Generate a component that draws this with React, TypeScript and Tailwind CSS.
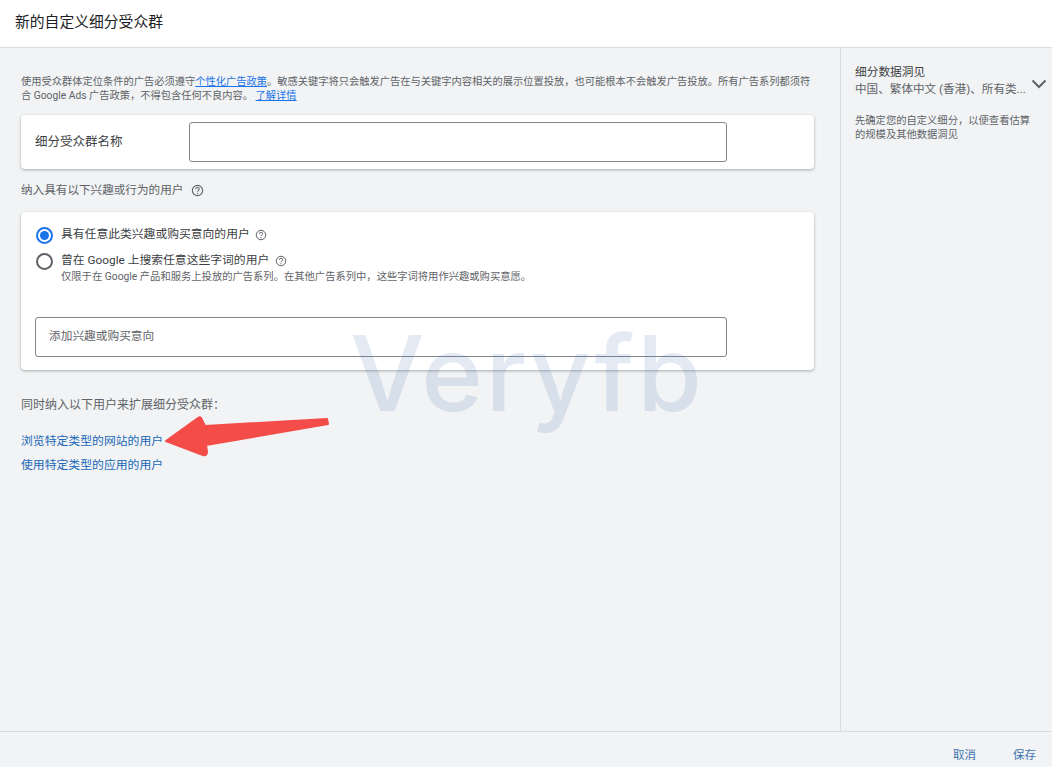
import React from "react";

const cjk = "font-['Roboto','Noto_Sans_CJK_SC',sans-serif]";

function Help({ size = 13 }: { size?: number }) {
  return (
    <svg width={size} height={size} viewBox="0 0 24 24" fill="none" className="shrink-0 text-[#5f6368]">
      <circle cx="12" cy="12" r="9.5" stroke="currentColor" strokeWidth="2" />
      <path d="M8.8 9.6a3.2 3.2 0 0 1 6.4 0c0 2.2-3.2 2.4-3.2 4.8" stroke="currentColor" strokeWidth="2" />
      <circle cx="12" cy="17.3" r="1.2" fill="currentColor" />
    </svg>
  );
}

function Radio({ checked }: { checked?: boolean }) {
  return checked ? (
    <span className="ml-px flex h-[17px] w-[17px] shrink-0 items-center justify-center rounded-full border-2 border-[#1a73e8]">
      <span className="h-[9px] w-[9px] rounded-full bg-[#1a73e8]" />
    </span>
  ) : (
    <span className="ml-px h-[17px] w-[17px] shrink-0 rounded-full border-2 border-[#5f6368]" />
  );
}

export default function App() {
  return (
    <div className={`${cjk} relative flex h-[767px] w-[1052px] flex-col overflow-hidden bg-[#f1f3f4] text-[#3c4043]`}>
      <header className="flex h-[48px] shrink-0 items-center border-b border-[#dadce0] bg-white pb-[3px] pl-[15px] text-[14.8px] text-[#202124]">
        新的自定义细分受众群
      </header>

      <div className="flex min-h-0 flex-1">
        <main className="w-[841px] shrink-0 border-r border-[#dadce0] pl-[21px] pr-[26px] pt-[27px]">
          <p className="text-[10.25px] leading-[14px] text-[#5f6368]">
            使用受众群体定位条件的广告必须遵守
            <a className="text-[#1a73e8] underline">个性化广告政策</a>
            。敏感关键字将只会触发广告在与关键字内容相关的展示位置投放，也可能根本不会触发广告投放。所有广告系列都须符合 Google Ads 广告政策，不得包含任何不良内容。{" "}
            <a className="text-[#1a73e8] underline">了解详情</a>
          </p>

          <section className="mt-[12px] flex h-[54px] items-center rounded bg-white pl-[14px] shadow-[0_1px_3px_rgba(60,64,67,0.4)]">
            <span className="w-[154px] shrink-0 text-[12.5px]">细分受众群名称</span>
            <div className="h-[40px] w-[538px] rounded-[3px] border border-[#80868b] bg-white" />
          </section>

          <div className="mt-[14px] flex items-center gap-[8px] text-[11.6px] leading-[14px] text-[#5f6368]">
            纳入具有以下兴趣或行为的用户
            <Help />
          </div>

          <section className="mt-[15px] h-[158px] rounded bg-white px-[14px] pt-[14px] shadow-[0_1px_3px_rgba(60,64,67,0.4)]">
            <div className="flex h-[18px] items-center">
              <Radio checked />
              <span className="ml-[8px] text-[11.8px] text-[#3c4043]">具有任意此类兴趣或购买意向的用户</span>
              <span className="ml-[5px]"><Help size={12} /></span>
            </div>
            <div className="mt-[9px] flex items-start">
              <Radio />
              <div className="ml-[8px]">
                <div className="flex h-[16px] items-center text-[11.8px] text-[#3c4043]">
                  曾在 Google 上搜索任意这些字词的用户
                  <span className="ml-[6px]"><Help size={12} /></span>
                </div>
                <div className="mt-px text-[10.3px] leading-[13px] text-[#5f6368]">
                  仅限于在 Google 产品和服务上投放的广告系列。在其他广告系列中，这些字词将用作兴趣或购买意愿。
                </div>
              </div>
            </div>
            <div className="mt-[34px] flex h-[40px] w-[692px] items-center rounded-[3px] border border-[#80868b] pl-[13px] text-[11.7px] text-[#5f6368]">
              添加兴趣或购买意向
            </div>
          </section>

          <p className="mt-[27px] text-[12px] leading-[16px] text-[#5f6368]">同时纳入以下用户来扩展细分受众群：</p>
          <a className="mt-[20px] block text-[11.85px] leading-[16px] text-[#1a67b8]">浏览特定类型的网站的用户</a>
          <a className="mt-[8px] block text-[11.85px] leading-[16px] text-[#1a67b8]">使用特定类型的应用的用户</a>
        </main>

        <aside className="relative min-w-0 flex-1 pl-[14px] pr-[12px] pt-[17px]">
          <div className="text-[11.7px] leading-[15px] text-[#3c4043]">细分数据洞见</div>
          <div className="mt-[2px] whitespace-nowrap text-[11.6px] leading-[15px] text-[#5f6368]">中国、繁体中文 (香港)、所有类...</div>
          <p className="mt-[17px] text-[10.3px] leading-[14px] text-[#5f6368]">
            先确定您的自定义细分，以便查看估算的规模及其他数据洞见
          </p>
          <svg width="16" height="10" viewBox="0 0 16 10" fill="none" className="absolute right-[5px] top-[31px]">
            <path d="M1.5 1.5 8 8l6.5-6.5" stroke="#5f6368" strokeWidth="2" />
          </svg>
        </aside>
      </div>

      <footer className="flex h-[36px] shrink-0 items-center justify-end gap-[37px] border-t border-[#dadce0] pr-[16px] pt-[12px] text-[11.5px] text-[#3f72ad]">
        <span>取消</span>
        <span>保存</span>
      </footer>

      <div className="pointer-events-none absolute left-[350px] top-[308px] font-['Inter',sans-serif] text-[105px] font-medium leading-[130px] tracking-[2.5px] text-[#3f6fb5] opacity-[0.14]">
        Veryfb
      </div>

      <svg width="180" height="50" viewBox="0 0 180 50" className="pointer-events-none absolute left-[160px] top-[411px]">
        <path
          d="M6 30 L38 7 Q41 5 42 9 L45 15 L167 8 L168 13 L46 34 L47 41 Q47 45 43 44 Z"
          fill="#f44c48"
          stroke="#f44c48"
          strokeWidth="2"
          strokeLinejoin="round"
        />
      </svg>
    </div>
  );
}
